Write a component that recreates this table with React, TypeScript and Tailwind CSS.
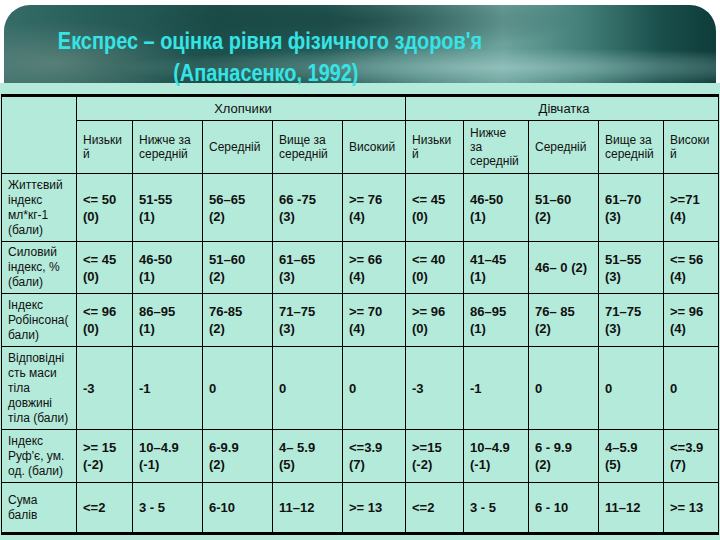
import React from "react"

type Val = string | [string, string]

interface Row {
  label: string[]
  h: string
  boys: Val[]
  girls: Val[]
}

const rows: Row[] = [
  {
    label: ["Життєвий", "індекс", "мл*кг-1", "(бали)"],
    h: "h-[68px]",
    boys: [["<= 50", "(0)"], ["51-55", "(1)"], ["56–65", "(2)"], ["66 -75", "(3)"], [">= 76", "(4)"]],
    girls: [["<= 45", "(0)"], ["46-50", "(1)"], ["51–60", "(2)"], ["61–70", "(3)"], [">=71", "(4)"]],
  },
  {
    label: ["Силовий", "індекс, %", "(бали)"],
    h: "h-[52px]",
    boys: [["<= 45", "(0)"], ["46-50", "(1)"], ["51–60", "(2)"], ["61–65", "(3)"], [">= 66", "(4)"]],
    girls: [["<= 40", "(0)"], ["41–45", "(1)"], "46– 0 (2)", ["51–55", "(3)"], ["<= 56", "(4)"]],
  },
  {
    label: ["Індекс", "Робінсона(", "бали)"],
    h: "h-[53px]",
    boys: [["<= 96", "(0)"], ["86–95", "(1)"], ["76-85", "(2)"], ["71–75", "(3)"], [">= 70", "(4)"]],
    girls: [[">= 96", "(0)"], ["86–95", "(1)"], ["76– 85", "(2)"], ["71–75", "(3)"], [">= 96", "(4)"]],
  },
  {
    label: ["Відповідні", "сть маси", "тіла", "довжині", "тіла (бали)"],
    h: "h-[83px]",
    boys: ["-3", "-1", "0", "0", "0"],
    girls: ["-3", "-1", "0", "0", "0"],
  },
  {
    label: ["Індекс", "Руф'є, ум.", "од. (бали)"],
    h: "h-[53px]",
    boys: [[">= 15", "(-2)"], ["10–4.9", "(-1)"], ["6-9.9", "(2)"], ["4– 5.9", "(5)"], ["<=3.9", "(7)"]],
    girls: [[">=15", "(-2)"], ["10–4.9", "(-1)"], ["6 - 9.9", "(2)"], ["4–5.9", "(5)"], ["<=3.9", "(7)"]],
  },
  {
    label: ["Сума", "балів"],
    h: "h-[51px]",
    boys: ["<=2", "3 - 5", "6-10", "11–12", ">= 13"],
    girls: ["<=2", "3 - 5", "6 - 10", "11–12", ">= 13"],
  },
]

const widths = [75, 56, 70, 70, 70, 63, 58, 65, 70, 65, 55]

const cell = "border border-black pl-[6px] pr-[2px] align-middle"

function ValueCell({ v }: { v: Val }) {
  return (
    <td className={`${cell} text-[13px] leading-[17px] font-bold text-[#111]`}>
      {Array.isArray(v) ? (
        <>
          {v[0]}
          <br />
          {v[1]}
        </>
      ) : (
        v
      )}
    </td>
  )
}

function Banner() {
  return (
    <div className="relative mx-[4px] mt-[5px] h-[78px] rounded-t-[26px] bg-[linear-gradient(90deg,#356c68_0%,#265c58_14%,#1d4f4b_30%,#265d59_45%,#4d837e_58%,#6da39d_70%,#417c77_82%,#1a4f4c_92%,#0e3c39_100%)]">
      <div className="absolute inset-0 rounded-t-[26px] bg-[radial-gradient(ellipse_55%_25%_at_70%_80%,rgba(180,220,215,0.5),transparent),radial-gradient(ellipse_20%_55%_at_7%_75%,rgba(140,160,150,0.45),transparent),radial-gradient(ellipse_30%_40%_at_50%_20%,rgba(15,50,48,0.5),transparent)]" />
      <h1 className="relative z-10 w-[532px] pt-[20px] text-center text-[24px] leading-[32px] font-bold text-[#36e4e6] scale-x-[0.83] [font-family:'Liberation_Sans',Arial,sans-serif]">
        Експрес – оцінка рівня фізичного здоров'я
        <br />
        <span className="relative right-[5px]">(Апанасенко, 1992)</span>
      </h1>
    </div>
  )
}

export default function App() {
  return (
    <div className="w-[720px] h-[540px] bg-white overflow-hidden [font-family:'Liberation_Sans',Arial,sans-serif]">
      <Banner />
      <div className="h-[457px] bg-[#b4ead9] pt-[11px] pl-[1px]">
        <table className="table-fixed border-collapse border-t-[3px] border-b-[3px] border-x border-black text-[#111] w-[717px]">
          <colgroup>
            {widths.map((w, i) => (
              <col key={i} style={{ width: w }} />
            ))}
          </colgroup>
          <thead>
            <tr className="h-[25px]">
              <td rowSpan={2} className={cell}></td>
              <td colSpan={5} className={`${cell} text-center text-[13px] font-normal`}>
                Хлопчики
              </td>
              <td colSpan={5} className={`${cell} text-center text-[13px] font-normal`}>
                Дівчатка
              </td>
            </tr>
            <tr className="h-[53px] text-[12px] leading-[14px]">
              <td className={cell}>Низьки<br />й</td>
              <td className={cell}>Нижче за<br />середній</td>
              <td className={cell}>Середній</td>
              <td className={cell}>Вище за<br />середній</td>
              <td className={cell}>Високий</td>
              <td className={cell}>Низьки<br />й</td>
              <td className={cell}>Нижче<br />за<br />середній</td>
              <td className={cell}>Середній</td>
              <td className={cell}>Вище за<br />середній</td>
              <td className={cell}>Високи<br />й</td>
            </tr>
          </thead>
          <tbody>
            {rows.map((r, i) => (
              <tr key={i} className={r.h}>
                <td className={`${cell} text-[12px] leading-[15px]`}>
                  {r.label.map((l, j) => (
                    <React.Fragment key={j}>
                      {j > 0 && <br />}
                      {l}
                    </React.Fragment>
                  ))}
                </td>
                {r.boys.map((v, j) => (
                  <ValueCell key={"b" + j} v={v} />
                ))}
                {r.girls.map((v, j) => (
                  <ValueCell key={"g" + j} v={v} />
                ))}
              </tr>
            ))}
          </tbody>
        </table>
      </div>
    </div>
  )
}
